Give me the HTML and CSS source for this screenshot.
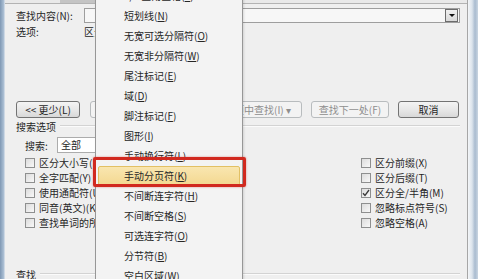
FILE: index.html
```html
<!DOCTYPE html>
<html lang="zh-CN">
<head>
    <meta charset="UTF-8">
    <title>查找和替换</title>
    <link rel="stylesheet" href="styles.css">
</head>
<body>
    <div class="window">
        <div class="frame-left"></div>

        <div class="dialog">
            <div class="tabs"><span class="tab"></span></div>

            <div class="page">
                <div class="row">
                    <span class="label">查找内容(N):</span>
                    <div class="combo"><span class="combo-arrow"></span></div>
                </div>
                <div class="row">
                    <span class="label">选项:</span>
                    <span>区分全/半角</span>
                </div>

                <div class="buttons">
                    <button class="btn btn-less">&lt;&lt; 更少(L)</button>
                    <button class="btn btn-read" disabled>阅读突出显示(R) ▾</button>
                    <button class="btn btn-in" disabled>在以下项中查找(I) ▾</button>
                    <button class="btn btn-next" disabled>查找下一处(F)</button>
                    <button class="btn btn-cancel">取消</button>
                </div>

                <div class="group-title">
                    <span>搜索选项</span>
                    <i class="rule"></i>
                </div>

                <div class="search-row">
                    <span class="search-label">搜索:</span>
                    <div class="select">全部</div>
                </div>

                <div class="options">
                    <div class="opt"><span class="box"></span>区分大小写(H)</div>
                    <div class="opt"><span class="box"></span>区分前缀(X)</div>
                    <div class="opt"><span class="box"></span>全字匹配(Y)</div>
                    <div class="opt"><span class="box"></span>区分后缀(T)</div>
                    <div class="opt"><span class="box"></span>使用通配符(U)</div>
                    <div class="opt">
                        <span class="box">
                            <svg width="8" height="8" viewBox="0 0 8 8"><path d="M1 4.2 L3 6.5 L7 1" fill="none" stroke="#3a3a3a" stroke-width="1.3"/></svg>
                        </span>区分全/半角(M)
                    </div>
                    <div class="opt"><span class="box"></span>同音(英文)(K)</div>
                    <div class="opt"><span class="box"></span>忽略标点符号(S)</div>
                    <div class="opt"><span class="box"></span>查找单词的所有形式(英文)(W)</div>
                    <div class="opt"><span class="box"></span>忽略空格(A)</div>
                </div>

                <div class="group-title bottom">
                    <span>查找</span>
                    <i class="rule"></i>
                </div>
            </div>
        </div>

        <div class="frame-right"></div>

        <!-- special characters dropdown -->
        <ul class="menu">
            <li>1/4 全角空格(<u>4</u>)</li>
            <li>短划线(<u>N</u>)</li>
            <li>无宽可选分隔符(<u>O</u>)</li>
            <li>无宽非分隔符(<u>W</u>)</li>
            <li>尾注标记(<u>E</u>)</li>
            <li>域(<u>D</u>)</li>
            <li>脚注标记(<u>F</u>)</li>
            <li>图形(<u>I</u>)</li>
            <li>手动换行符(<u>L</u>)</li>
            <li class="active">手动分页符(<u>K</u>)</li>
            <li>不间断连字符(<u>H</u>)</li>
            <li>不间断空格(<u>S</u>)</li>
            <li>可选连字符(<u>O</u>)</li>
            <li>分节符(<u>B</u>)</li>
            <li>空白区域(<u>W</u>)</li>
        </ul>

        <div class="callout"></div>
    </div>
</body>
</html>
```

FILE: styles.css
```css
* {
    margin: 0;
    padding: 0;
    box-sizing: border-box;
}

body {
    font-family: "Noto Sans CJK SC", "Liberation Sans", sans-serif;
    font-size: 10px;
    color: #262626;
    background: #c9d6e3;
    overflow: hidden;
}

.window {
    position: relative;
    display: flex;
    width: 478px;
    height: 279px;
    overflow: hidden;
}

.frame-left {
    width: 5px;
    background: linear-gradient(90deg, #7f98b4 0%, #a9bdd2 70%, #dfe6ee 100%);
}

.frame-right {
    width: 10px;
    background: linear-gradient(90deg, #f4f6f8 0%, #dce4ec 40%, #a9bbcf 70%, #c9d5e1 100%);
}

.dialog {
    width: 463px;
    background: #efefef;
    border-right: 1px solid #a6a6a6;
    display: flex;
    flex-direction: column;
}

.tabs {
    height: 3px;
    background: #e9e9e9;
}

.tab {
    display: block;
    width: 35px;
    height: 3px;
    margin-left: 55px;
    background: #c4c4c4;
}

.page {
    flex: 1;
    border-top: 1px solid #b3b3b3;
    padding: 4px 7px 0 11px;
}

.row {
    display: flex;
    align-items: center;
    height: 15px;
    line-height: 15px;
}

.row + .row {
    margin-top: 1px;
}

.label {
    width: 68px;
    flex-shrink: 0;
}

.combo {
    flex: 1;
    height: 15px;
    background: #f7f7f7;
    border: 1px solid #9e9e9e;
    display: flex;
    justify-content: flex-end;
    align-items: center;
    padding-right: 1px;
}

.combo-arrow {
    width: 13px;
    height: 13px;
    border: 1px solid #6c6c6c;
    background: linear-gradient(#f0f0f0, #d9d9d9);
    position: relative;
}

.combo-arrow::after {
    content: "";
    position: absolute;
    left: 3px;
    top: 4px;
    border-left: 3px solid transparent;
    border-right: 3px solid transparent;
    border-top: 3px solid #111;
}

.buttons {
    display: flex;
    margin-top: 62px;
    height: 17px;
}

.btn {
    font: inherit;
    height: 17px;
    line-height: 15px;
    border: 1px solid #737373;
    border-radius: 3px;
    background: linear-gradient(#f4f4f4 0%, #e8e8e8 50%, #d8d8d8 100%);
    color: #1f1f1f;
}

.btn:disabled {
    border-color: #b8bcbe;
    background: #f3f3f3;
    color: #8e8e8e;
}

.btn-less { width: 64px; }
.btn-read { width: 95px; margin-left: 10px; }
.btn-in { width: 109px; margin-left: 8px; }
.btn-next { width: 78px; margin-left: 9px; }
.btn-cancel { width: 61px; margin-left: 9px; }

.group-title {
    display: flex;
    align-items: center;
    height: 14px;
    margin-top: 1px;
}

.group-title.bottom {
    margin-top: 37px;
}

.rule {
    flex: 1;
    height: 2px;
    margin-left: 4px;
    border-top: 1px solid #d3d3d3;
    border-bottom: 1px solid #fbfbfb;
}

.search-row {
    display: flex;
    align-items: center;
    height: 16px;
    margin-top: 4px;
    padding-left: 9px;
}

.search-label {
    width: 32px;
}

.select {
    width: 150px;
    height: 16px;
    line-height: 14px;
    padding-left: 3px;
    background: #fff;
    border: 1px solid #acacac;
}

.options {
    display: grid;
    grid-template-columns: 336px 1fr;
    grid-auto-rows: 15px;
    margin-top: 2px;
    padding-left: 9px;
}

.opt {
    display: flex;
    align-items: center;
    white-space: nowrap;
}

.box {
    width: 10px;
    height: 10px;
    margin-right: 4px;
    border: 1px solid #8e8f8f;
    background: linear-gradient(135deg, #dcdcdc, #f8f8f8);
    display: flex;
    align-items: center;
    justify-content: center;
}

.menu {
    position: absolute;
    left: 95px;
    top: -17px;
    width: 148px;
    padding: 2px;
    list-style: none;
    border: 1px solid #979797;
    background: #f3f3f3;
    box-shadow: 1px 1px 2px rgba(0, 0, 0, 0.12);
}

.menu li {
    height: 20px;
    line-height: 20px;
    padding-left: 26px;
    white-space: nowrap;
    color: #262626;
}

.menu li.active {
    background: linear-gradient(#f9e6b0, #f3d890);
    border: 1px solid #e2c064;
    border-radius: 2px;
    line-height: 18px;
    padding-left: 25px;
}

.callout {
    position: absolute;
    left: 93px;
    top: 157px;
    width: 153px;
    height: 30px;
    border: 3px solid #d1291f;
    border-radius: 2px;
    box-shadow: 0 0 2px rgba(200, 30, 20, 0.5);
}
```
